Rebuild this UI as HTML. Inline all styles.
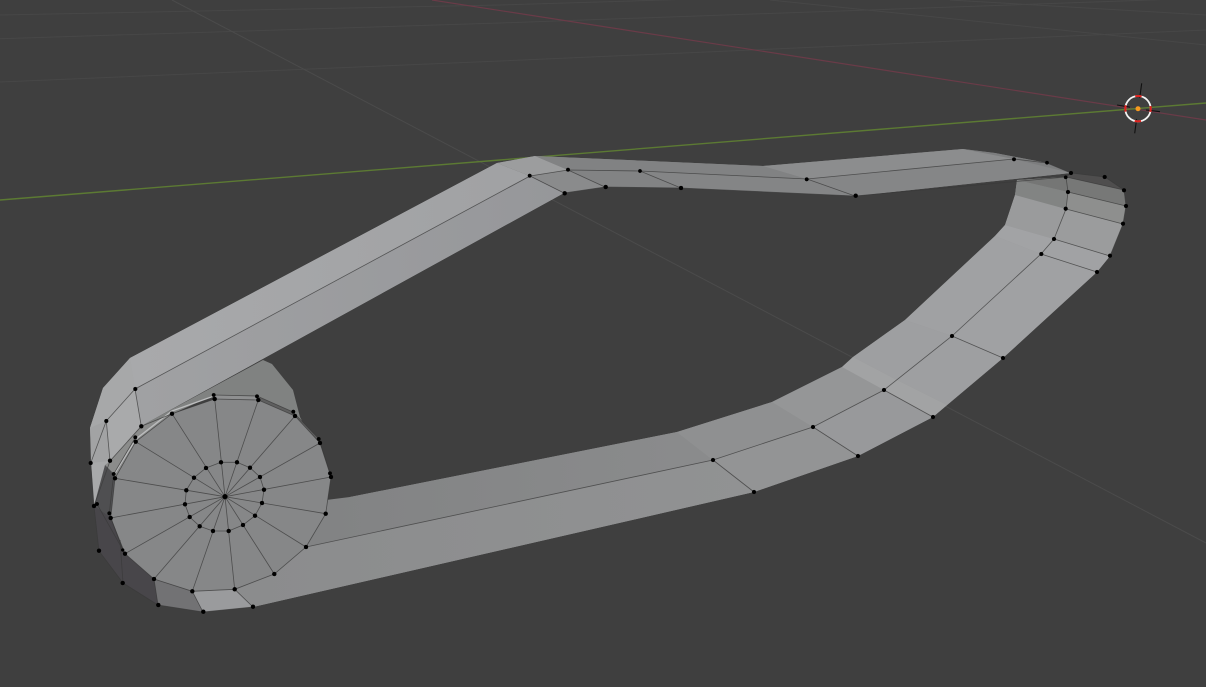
<!DOCTYPE html>
<html><head><meta charset="utf-8"><title>Viewport</title>
<style>html,body{margin:0;padding:0;background:#3f3f3f;width:1206px;height:687px;overflow:hidden}svg{display:block}</style>
</head><body>
<svg width="1206" height="687" viewBox="0 0 1206 687" xmlns="http://www.w3.org/2000/svg">
<defs>
<linearGradient id="li" gradientUnits="userSpaceOnUse" x1="330" y1="0" x2="680" y2="0"><stop offset="0" stop-color="#828384"/><stop offset="1" stop-color="#8a8b8c"/></linearGradient>
<linearGradient id="lo" gradientUnits="userSpaceOnUse" x1="250" y1="0" x2="754" y2="0"><stop offset="0" stop-color="#8b8c8d"/><stop offset="1" stop-color="#919293"/></linearGradient>
<linearGradient id="ut" gradientUnits="userSpaceOnUse" x1="135" y1="0" x2="500" y2="0"><stop offset="0" stop-color="#a8a9ab"/><stop offset="1" stop-color="#a1a2a4"/></linearGradient>
<linearGradient id="ub" gradientUnits="userSpaceOnUse" x1="140" y1="0" x2="560" y2="0"><stop offset="0" stop-color="#a0a1a3"/><stop offset="1" stop-color="#96979a"/></linearGradient>
</defs>
<rect width="1206" height="687" fill="#3f3f3f"/>
<g fill="none" stroke="#474747" stroke-width="1">
<path d="M0 82 L500 61 L1206 30"/>
<path d="M0 38.7 L500 23 L1206 -2"/>
<path d="M0 15 L500 5 L760 -3"/>
<path d="M770 0 L1206 45"/>
<path d="M950 0 L1206 15"/>
<path d="M172 0 L1206 543" stroke="#4b4b4b"/>
</g>
<path d="M432 0 L1206 120" stroke="#6a3b48" stroke-width="1.2" fill="none"/>
<path d="M0 200 L500 160 L1206 103" stroke="#5c7a33" stroke-width="1.4" fill="none"/>

<!-- back dome of the cylinder -->
<polygon points="263,360 272,364 293,390 300,417 331,477 258,400 214,395 172,414 141,426" fill="#808281"/>
<polygon points="214,395 257,396 293,412 319,439 331,477 295,416 258,400 215,399" fill="#5f5f5f"/>
<polygon points="214,395 257,396 258,400 215,399" fill="#8e8f90"/>

<!-- underlays to hide seams -->
<polygon points="130,358 497,163 564,193 141,426 94,506 90,428 103,388" fill="#a3a4a6"/>
<polygon points="235,589 306,547 350,497 677,432 772,402 842,367 853,357 905,320 995,236 1005,225 1015,195 1017,180 1066,177 1124,190 1126,206 1123,224 1110,256 1097,272 1003,358 933,417 858,456 754,492 253,607" fill="#959697"/>
<polygon points="497,163 535,156 763,166 963,149 995,153 1047,163 1071,173 855,196 681,188 605,187 564,193 530,176" fill="#858687"/>

<!-- upper straight strip -->
<polygon points="130,358 497,163 530,176 135,389" fill="url(#ut)"/>
<polygon points="135,389 530,176 564,193 141,426" fill="url(#ub)"/>
<!-- upper left rounding -->
<polygon points="130,358 135,389 106,421 90,428 103,388" fill="#a7a8a9"/>
<polygon points="135,389 141,426 110,461 106,421" fill="#a9aaab"/>
<polygon points="106,421 110,461 91,463 90,428" fill="#a2a3a4"/>
<polygon points="91,463 110,461 94,506" fill="#a8a9aa"/>
<polygon points="110,461 141,426 172,414 136,442 115,478 105,465" fill="#8b8c8b"/>
<polygon points="105,465 113,473 115,478 111,518 94,506" fill="#4f4f51"/>

<!-- lower-left back faces -->
<polygon points="94,506 111,518 125,554 154,579 158,605 123,583 99,551" fill="#48464a"/>
<polygon points="154,579 192,591 203,612 158,605" fill="#727274"/>
<polygon points="192,591 235,589 253,607 203,612" fill="#9a9b9d"/>

<!-- lower long strip -->
<polygon points="326,500 350,497 677,432 713,460 300,548" fill="url(#li)"/>
<polygon points="235,589 306,547 713,460 754,492 253,607" fill="url(#lo)"/>
<polygon points="677,432 772,402 813,427 713,460" fill="#8f9091"/>
<polygon points="713,460 813,427 858,456 754,492" fill="#939495"/>
<polygon points="772,402 842,367 884,390 813,427" fill="#959697"/>
<polygon points="813,427 884,390 933,417 858,456" fill="#98999b"/>
<polygon points="853,357 905,320 952,336 897,380" fill="#9e9fa1"/>
<polygon points="897,380 952,336 1003,358 947,405" fill="#9e9fa1"/>
<polygon points="842,367 853,357 897,380 947,405 933,417 884,390" fill="#a2a3a4"/>
<polygon points="905,320 995,236 1041,254 952,336" fill="#a0a1a3"/>
<polygon points="952,336 1041,254 1097,272 1003,358" fill="#a0a1a3"/>
<polygon points="995,236 1005,225 1054,239 1041,254" fill="#a2a3a5"/>
<polygon points="1041,254 1054,239 1110,256 1097,272" fill="#a1a2a4"/>
<polygon points="1005,225 1015,195 1066,209 1054,239" fill="#9a9b9c"/>
<polygon points="1054,239 1066,209 1123,224 1110,256" fill="#9b9c9d"/>
<polygon points="1015,195 1017,180 1068,192 1066,209" fill="#828483"/>
<polygon points="1066,209 1068,192 1126,206 1123,224" fill="#8e8f8e"/>
<polygon points="1017,180 1066,177 1068,192" fill="#757675"/>
<polygon points="1068,192 1066,177 1124,190 1126,206" fill="#777877"/>
<polygon points="1066,177 1071,173 1105,177 1124,190" fill="#4f4e4e"/>

<!-- top band -->
<polygon points="497,163 535,156 568,170 530,176" fill="#9c9d9e"/>
<polygon points="530,176 568,170 605,187 564,193" fill="#8a8b8c"/>
<polygon points="535,156 763,166 807,179 568,170" fill="#818283"/>
<polygon points="568,170 640,171 681,188 605,187" fill="#828384"/>
<polygon points="640,171 807,179 855,196 681,188" fill="#848586"/>
<polygon points="763,166 963,149 1014,159 807,179" fill="#8c8d8e"/>
<polygon points="807,179 1014,159 1071,173 855,196" fill="#858687"/>
<polygon points="963,149 995,153 1047,163 1071,173 1014,159" fill="#7c7d7e"/>

<!-- front cap -->
<polygon points="214.7,399 258.3,400 295,416 320,443 331,477 325.7,513.7 306,547 274.3,574 234.7,589.3 192.3,591.3 154,579 125,553.7 110.7,518 115,478.3 135.7,441.7 172,413.7" fill="#868788"/>
<path d="M115 473 L136 439 L172 411 L214 396" fill="none" stroke="#bcbdbe" stroke-width="1.3"/>

<!-- wires -->
<g fill="none" stroke="#3a3a3a" stroke-width="0.8" stroke-opacity="0.75">
<polygon points="214.7,399 258.3,400 295,416 320,443 331,477 325.7,513.7 306,547 274.3,574 234.7,589.3 192.3,591.3 154,579 125,553.7 110.7,518 115,478.3 135.7,441.7 172,413.7"/>
<polygon points="221,462.3 237,462.3 250,467.7 260,477 264,489.7 262,503 255,515.7 243,525 228.7,531 213,531 199.7,526.3 189.7,517 185,504.3 186.3,490.3 194,477.7 206,468"/>
<path d="M225 496.7L214.7 399M225 496.7L258.3 400M225 496.7L295 416M225 496.7L320 443M225 496.7L331 477M225 496.7L325.7 513.7M225 496.7L306 547M225 496.7L274.3 574M225 496.7L234.7 589.3M225 496.7L192.3 591.3M225 496.7L154 579M225 496.7L125 553.7M225 496.7L110.7 518M225 496.7L115 478.3M225 496.7L135.7 441.7M225 496.7L172 413.7"/>
<path d="M214 395L257 396L293 412L319 439L330 473"/>
<path d="M135.7 437L113.7 474L109.3 513.3L122.7 550"/>
<path d="M306 547L713 460L813 427L884 390L952 336L1041 254L1054 239L1066 209L1068 192L1066 177L1071 173"/>
<path d="M713 460L754 492M813 427L858 456M884 390L933 417M952 336L1003 358M1041 254L1097 272M1054 239L1110 256M1066 209L1123 224M1068 192L1126 206M1066 177L1124 190"/>
<path d="M1071 173L1105 177L1124 190L1126 206L1123 224L1110 256"/>
<path d="M135 389L530 176L568 170L640 171L807 179L1014 159L1047 163L1071 173"/>
<path d="M530 176L564 193M568 170L605 187M640 171L681 188M807 179L855 196"/>
<path d="M564 193L605 187L681 188L855 196L1066 177"/>
<path d="M135 389L106.3 421L90.7 463L94 506M135 389L141.3 426.3M106.3 421L110 461M110 461L94 506M141.3 426.3L110 461M141.3 426.3L172 413.7"/>
<path d="M94 506L99 551L123 583L158 605L203 612L253 607M123 583L120 540M97 504L125 553.7M158 605L154 579M203 612L192.3 591.3M253 607L234.7 589.3"/>
</g>

<!-- vertices -->
<g fill="#000" stroke="#000" stroke-width="0.4">
<circle cx="225" cy="496.7" r="2.4"/>
<circle cx="214.7" cy="399" r="2"/><circle cx="258.3" cy="400" r="2"/><circle cx="295" cy="416" r="2"/><circle cx="320" cy="443" r="2"/><circle cx="331" cy="477" r="2"/><circle cx="325.7" cy="513.7" r="2"/><circle cx="306" cy="547" r="2"/><circle cx="274.3" cy="574" r="2"/><circle cx="234.7" cy="589.3" r="2"/><circle cx="192.3" cy="591.3" r="2"/><circle cx="154" cy="579" r="2"/><circle cx="125" cy="553.7" r="2"/><circle cx="110.7" cy="518" r="2"/><circle cx="115" cy="478.3" r="2"/><circle cx="135.7" cy="441.7" r="2"/><circle cx="172" cy="413.7" r="2"/>
<circle cx="221" cy="462.3" r="2"/><circle cx="237" cy="462.3" r="2"/><circle cx="250" cy="467.7" r="2"/><circle cx="260" cy="477" r="2"/><circle cx="264" cy="489.7" r="2"/><circle cx="262" cy="503" r="2"/><circle cx="255" cy="515.7" r="2"/><circle cx="243" cy="525" r="2"/><circle cx="228.7" cy="531" r="2"/><circle cx="213" cy="531" r="2"/><circle cx="199.7" cy="526.3" r="2"/><circle cx="189.7" cy="517" r="2"/><circle cx="185" cy="504.3" r="2"/><circle cx="186.3" cy="490.3" r="2"/><circle cx="194" cy="477.7" r="2"/><circle cx="206" cy="468" r="2"/>
<circle cx="213.7" cy="395" r="1.8"/><circle cx="257" cy="396.3" r="1.8"/><circle cx="293.3" cy="411.7" r="1.8"/><circle cx="318.7" cy="439" r="1.8"/><circle cx="330" cy="473.3" r="1.8"/><circle cx="135.3" cy="437.3" r="1.8"/><circle cx="113.7" cy="474" r="1.8"/><circle cx="109.3" cy="513.3" r="1.8"/><circle cx="122.7" cy="550" r="1.5"/>
<circle cx="94" cy="506" r="2"/><circle cx="97" cy="504" r="1.8"/><circle cx="99" cy="550.7" r="2"/><circle cx="122.7" cy="583" r="2"/><circle cx="158.3" cy="605" r="2"/><circle cx="203.3" cy="611.7" r="2"/><circle cx="253" cy="606.7" r="2"/>
<circle cx="135.3" cy="389" r="1.9"/><circle cx="106.3" cy="421" r="1.9"/><circle cx="90.7" cy="463" r="1.9"/><circle cx="141.3" cy="426.3" r="2"/><circle cx="110" cy="460.7" r="2"/>
<circle cx="713" cy="460" r="1.9"/><circle cx="754" cy="492" r="1.9"/><circle cx="813" cy="427" r="1.9"/><circle cx="858" cy="456" r="1.9"/><circle cx="884" cy="390" r="1.9"/><circle cx="933" cy="417" r="1.9"/><circle cx="952" cy="336" r="1.9"/><circle cx="1003" cy="358" r="1.9"/><circle cx="1041.3" cy="254" r="1.9"/><circle cx="1097" cy="272" r="1.9"/><circle cx="1054" cy="239" r="1.9"/><circle cx="1110" cy="255.7" r="1.9"/><circle cx="1065.7" cy="208.7" r="1.9"/><circle cx="1123" cy="223.7" r="1.9"/><circle cx="1068" cy="192" r="1.9"/><circle cx="1126" cy="206" r="1.9"/><circle cx="1065.7" cy="177.3" r="1.7"/><circle cx="1124" cy="190.3" r="1.9"/><circle cx="1104.7" cy="177" r="1.9"/><circle cx="1071" cy="173" r="1.9"/><circle cx="1047" cy="162.7" r="1.7"/><circle cx="1014" cy="159.3" r="1.8"/>
<circle cx="529.7" cy="175.7" r="1.8"/><circle cx="568" cy="169.7" r="1.8"/><circle cx="640" cy="171" r="1.7"/><circle cx="806.7" cy="179.3" r="1.8"/><circle cx="564.7" cy="193.3" r="2"/><circle cx="605.7" cy="187" r="2"/><circle cx="681" cy="188" r="2"/><circle cx="855.7" cy="195.7" r="2"/>
</g>

<!-- 3D cursor -->
<g fill="none">
<path d="M1141.7 83.3L1139.7 98M1136.6 119L1134.7 133.3M1117 105L1130 107.2M1146 110L1160 111.7" stroke="#111" stroke-width="1.1"/>
<circle cx="1138" cy="108.7" r="12.7" stroke="#f2f2f2" stroke-width="1.8"/>
<circle cx="1138" cy="108.7" r="12.7" stroke="#e0201c" stroke-width="2" stroke-dasharray="6.5 13.45" stroke-dashoffset="3.25"/>
</g>
<circle cx="1138" cy="108.7" r="2.5" fill="#f7991f"/>
</svg>
</body></html>
